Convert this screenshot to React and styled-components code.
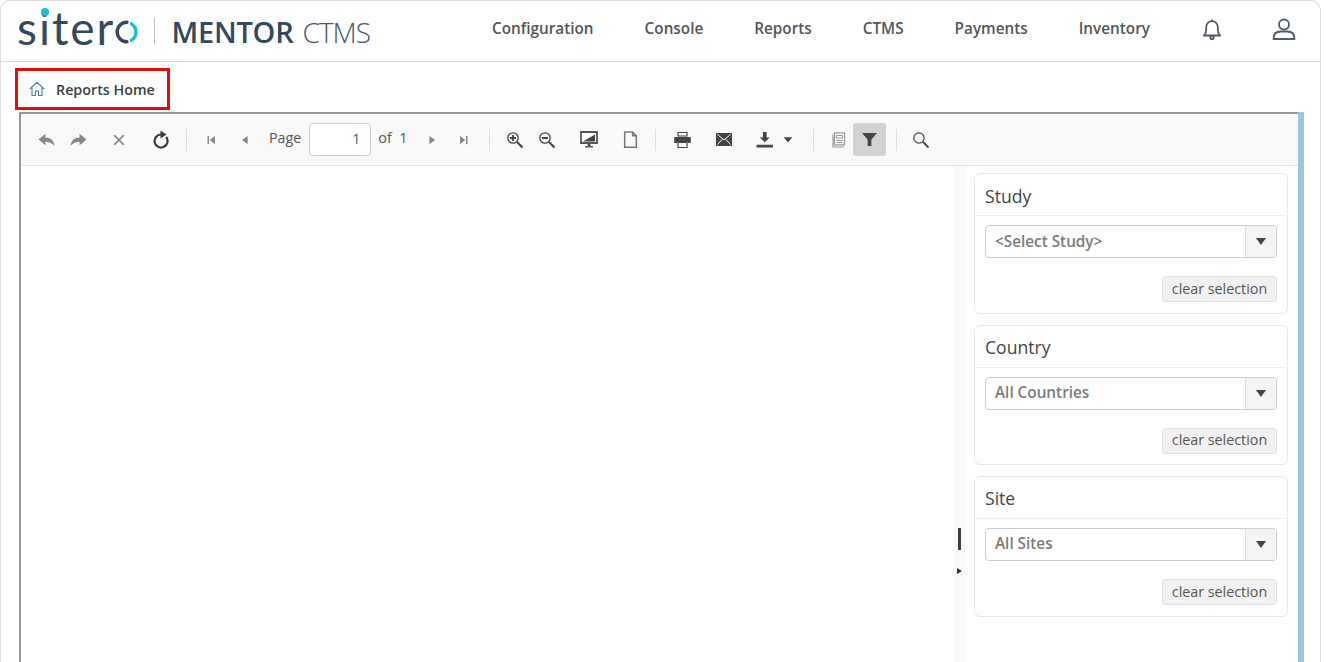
import styled, { createGlobalStyle } from "styled-components";

const GlobalStyle = createGlobalStyle`
  html, body {
    margin: 0;
    height: 100%;
    overflow: hidden;
    background: #fff;
    font-family: "Open Sans", "Liberation Sans", sans-serif;
  }
  * {
    box-sizing: border-box;
  }
`;

const Page = styled.div`
  width: 1326px;
  height: 662px;
  overflow: hidden;
`;

const Frame = styled.div`
  width: 1321px;
  height: 662px;
  border: 1px solid #ddd;
  border-bottom: 0;
  border-radius: 10px 10px 0 0;
  overflow: hidden;
`;

const Header = styled.header`
  display: flex;
  align-items: center;
  height: 61px;
  border-bottom: 1px solid #ddd;
  padding: 0 0 5px 16px;
`;

const Logo = styled.div`
  display: flex;
  align-items: center;
  width: 475px;
`;

const Wordmark = styled.div`
  position: relative;
  display: flex;
  align-items: center;
  font-family: Lato, "Open Sans", sans-serif;
  font-size: 46px;
  line-height: 46px;
  letter-spacing: 2px;
  color: #34495e;
  margin-top: -1px;
`;

const ITeal = styled.i`
  position: absolute;
  left: 23.5px;
  top: 2.5px;
  width: 8px;
  height: 8px;
  border-radius: 50%;
  background: #19bfd0;
`;

const LogoDivider = styled.span`
  width: 1px;
  height: 26px;
  background: #b9bec2;
  margin: 5px 16px 0 16px;
`;

const Product = styled.div`
  margin-top: 6px;
  font-size: 29px;
  font-weight: 600;
  color: #34495e;
  letter-spacing: -0.2px;
  white-space: nowrap;

  span {
    font-weight: 300;
    font-size: 28px;
    color: #46586a;
    letter-spacing: -1px;
    margin-left: 9px;
  }
`;

const Nav = styled.nav`
  display: flex;
  gap: 51px;
  margin-top: -2px;
  font-size: 15.3px;
  font-weight: 600;
  color: #555;
`;

const HeaderIcon = styled.span`
  display: flex;
  margin-left: ${(p) => p.$ml}px;
  color: #4f5b66;
`;

const Crumb = styled.div`
  display: flex;
  align-items: center;
  gap: 11px;
  width: 155px;
  height: 42px;
  margin: 6px 0 2px 14px;
  padding-left: 11px;
  border: 3px solid #e00b0b;
  font-size: 14.3px;
  font-weight: 600;
  color: #3a3f47;
`;

const Panel = styled.div`
  display: flex;
  width: 1285px;
  height: 550px;
  margin-left: 18px;
`;

const Viewer = styled.div`
  flex: 1;
  display: flex;
  flex-direction: column;
  border-top: 2px solid #999;
  border-left: 2px solid #999;
`;

const BlueBar = styled.div`
  width: 6px;
  background: #9bc8d8;
`;

const Toolbar = styled.div`
  display: flex;
  align-items: center;
  height: 52px;
  padding-left: 9px;
  background: #f9f9f9;
  border-bottom: 1px solid #e5e5e5;
  font-size: 14.3px;
  color: #555;
`;

const Slot = styled.span`
  display: flex;
  align-items: center;
  justify-content: center;
  flex: none;
  width: ${(p) => p.$w}px;
  height: 33px;
  margin-left: ${(p) => p.$ml || 0}px;
  border-radius: 3px;
  color: ${(p) => p.$color || "#444"};
  background: ${(p) => (p.$active ? "#d2d2d2" : "transparent")};
`;

const Sep = styled.span`
  flex: none;
  width: 1px;
  height: 22px;
  background: #ddd;
  margin: 0 ${(p) => p.$mr ?? 8}px 0 ${(p) => p.$ml ?? 8}px;
`;

const Label = styled.span`
  flex: none;
  margin-left: ${(p) => p.$ml}px;
  margin-top: -4px;
`;

const PageInput = styled.div`
  flex: none;
  width: 62px;
  height: 33px;
  margin-left: 8px;
  padding-right: 10px;
  border: 1px solid #ccc;
  border-radius: 4px;
  background: #fff;
  text-align: right;
  line-height: 30px;
`;

const Content = styled.div`
  flex: 1;
  display: flex;
`;

const Report = styled.div`
  flex: 1;
  background: #fff;
`;

const Splitter = styled.div`
  flex: none;
  display: flex;
  flex-direction: column;
  align-items: center;
  width: 13px;
  padding-top: 362px;
  background: #f9f9f9;
`;

const Handle = styled.span`
  width: 3px;
  height: 22px;
  background: #3d3d3d;
  margin-left: -1px;
`;

const HandleArrow = styled.span`
  width: 0;
  height: 0;
  margin: 18px 0 0 -1px;
  border-left: 5px solid #333;
  border-top: 3px solid transparent;
  border-bottom: 3px solid transparent;
`;

const Sidebar = styled.aside`
  flex: none;
  width: 332px;
  display: flex;
  flex-direction: column;
  gap: 11px;
  padding: 7px 10px 0 8px;
`;

const CardTitle = styled.div`
  height: 42px;
  margin: 0 1px;
  padding-left: 9px;
  border-bottom: 1px solid #eee;
  font-size: 17.6px;
  line-height: 44px;
  color: #444;
`;

const SelectValue = styled.div`
  flex: 1;
  padding-left: 9px;
  font-size: 15.3px;
  font-weight: 600;
  line-height: 30px;
  color: #7b7b7b;
`;

const Card = styled.section`
  height: 140.5px;
  border: 1px solid #e8e8e8;
  border-radius: 6px;

  & + & ${CardTitle} {
    line-height: 42px;
  }

  & + & ${SelectValue} {
    line-height: 28px;
  }
`;

const Select = styled.div`
  display: flex;
  height: 33px;
  margin: 9px 10px 18px;
  border: 1px solid #ccc;
  border-radius: 4px;
  overflow: hidden;
`;

const SelectArrow = styled.div`
  display: flex;
  align-items: center;
  justify-content: center;
  width: 31px;
  background: #f4f4f4;
  border-left: 1px solid #ddd;

  &::after {
    content: "";
    border-top: 7px solid #444;
    border-left: 5px solid transparent;
    border-right: 5px solid transparent;
  }
`;

const ClearRow = styled.div`
  display: flex;
  justify-content: flex-end;
  padding-right: 10px;
`;

const ClearButton = styled.button`
  width: 115px;
  height: 26px;
  padding: 0 0 2px;
  border: 1px solid #e0e0e0;
  border-radius: 4px;
  background: #f1f1f1;
  font-family: inherit;
  font-size: 14.3px;
  color: #555;
`;

const Icon = ({ size = 16, children, stroke }) => (
  <svg
    width={size}
    height={size}
    viewBox="0 0 16 16"
    fill={stroke ? "none" : "currentColor"}
    stroke={stroke ? "currentColor" : "none"}
    strokeWidth={stroke || 0}
  >
    {children}
  </svg>
);

const Magnifier = ({ sign }) => (
  <svg width="18" height="18" viewBox="0 0 18 18" fill="none" stroke="currentColor">
    <circle cx="7" cy="7" r="5.2" strokeWidth="1.3" />
    <path d="M11 11l5.5 5.5" strokeWidth="2" />
    {sign && <path d="M4 7h6" strokeWidth="1.8" />}
    {sign === "plus" && <path d="M7 4v6" strokeWidth="1.8" />}
  </svg>
);

const filters = [
  { title: "Study", value: "<Select Study>" },
  { title: "Country", value: "All Countries" },
  { title: "Site", value: "All Sites" },
];

const App = () => (
  <Page>
    <GlobalStyle />
    <Frame>
      <Header>
        <Logo>
          <Wordmark>
            siter
            <ITeal />
            <svg width="23" height="24" viewBox="0 0 23 24" fill="none" strokeWidth="3.4" strokeLinecap="round" style={{ marginTop: 8 }}>
              <path d="M12 2.200a9.800 9.800 0 1 0 0 19.600" stroke="#34495e" />
              <path d="M16.500 3.800a9.800 9.800 0 0 1 0 16.400" stroke="#19bfd0" />
            </svg>
          </Wordmark>
          <LogoDivider />
          <Product>
            MENTOR<span>CTMS</span>
          </Product>
        </Logo>
        <Nav>
          <span>Configuration</span>
          <span>Console</span>
          <span>Reports</span>
          <span>CTMS</span>
          <span>Payments</span>
          <span>Inventory</span>
        </Nav>
        <HeaderIcon $ml={51}>
          <svg width="22" height="24" viewBox="0 0 22 24" fill="none" stroke="currentColor" strokeWidth="1.8">
            <path d="M3 18.500c1.600-1.600 2.200-3 2.200-5.500V10a5.800 5.800 0 0 1 11.600 0v3c0 2.500.6 3.900 2.200 5.500z" strokeLinejoin="round" />
            <path d="M11 4V2.500" />
            <circle cx="11" cy="20.500" r="1.700" />
          </svg>
        </HeaderIcon>
        <HeaderIcon $ml={49}>
          <svg width="24" height="24" viewBox="0 0 24 24" fill="none" stroke="currentColor" strokeWidth="1.8">
            <circle cx="12" cy="7.500" r="5" />
            <path d="M1.500 22c0-5 3-7.500 7-7.500h7c4 0 7 2.500 7 7.500z" strokeLinejoin="round" />
          </svg>
        </HeaderIcon>
      </Header>
      <Crumb>
        <svg width="16" height="16" viewBox="0 0 16 16" fill="none" stroke="#3f7fc4" strokeWidth="1.100">
          <path d="M.8 8L8 1.300 15.200 8M3 6.500V14.500h3.500V10h3v4.500H13V6.500" />
        </svg>
        Reports Home
      </Crumb>
      <Panel>
        <Viewer>
          <Toolbar>
            <Slot $w={32} $color="#888">
              <Icon size={17}><path d="M7 2.500L.5 8 7 13.500V10c3.500 0 6 1 8.500 4-.5-5-3.500-8-8.500-8z" /></Icon>
            </Slot>
            <Slot $w={32} $color="#888">
              <Icon size={17}><path d="M9 2.500L15.500 8 9 13.500V10c-3.500 0-6 1-8.500 4 .5-5 3.500-8 8.500-8z" /></Icon>
            </Slot>
            <Slot $w={50} $color="#888">
              <Icon size={14} stroke={2}><path d="M2.500 2.500l11 11M13.500 2.500l-11 11" /></Icon>
            </Slot>
            <Slot $w={34} $color="#3c3c3c">
              <svg width="18" height="19" viewBox="0 0 18 19" fill="none" stroke="currentColor" strokeWidth="2.200">
                <path d="M9 4.500A6.500 6.500 0 1 0 14.200 7" />
                <path d="M8.500 0.500L14.500 4.500 8.500 8.500z" fill="currentColor" stroke="none" />
              </svg>
            </Slot>
            <Sep />
            <Slot $w={33} $color="#888">
              <Icon size={12}><path d="M2 2.500h2v11H2zM12 2.500v11L5 8z" /></Icon>
            </Slot>
            <Slot $w={33} $color="#888">
              <Icon size={12}><path d="M11.500 2.500v11L4 8z" /></Icon>
            </Slot>
            <Label $ml={8}>Page</Label>
            <PageInput>1</PageInput>
            <Label $ml={7}>of&nbsp;&nbsp;1</Label>
            <Slot $w={33} $ml={8} $color="#888">
              <Icon size={12}><path d="M4.500 2.500v11L12 8z" /></Icon>
            </Slot>
            <Slot $w={29} $color="#888">
              <Icon size={12}><path d="M14 2.500h-2v11h2zM4 2.500v11L11 8z" /></Icon>
            </Slot>
            <Sep $ml={12} $mr={8} />
            <Slot $w={33}><Magnifier sign="plus" /></Slot>
            <Slot $w={32}><Magnifier sign="minus" /></Slot>
            <Slot $w={51}>
              <svg width="18" height="17" viewBox="0 0 18 17">
                <path d="M1 1h16v11H1z" fill="#fff" stroke="#555" strokeWidth="1.800" />
                <path d="M3 10.500l12-7v7z" fill="#444" />
                <path d="M5 15h8v1.500H5zM7.500 12h3v3h-3z" fill="#555" />
              </svg>
            </Slot>
            <Slot $w={32} $color="#777">
              <Icon size={17} stroke={1.400}><path d="M2.500 1h7.500l3.500 3.500V15.200h-11zM10 1v3.500h3.500" /></Icon>
            </Slot>
            <Sep $ml={9} $mr={10} />
            <Slot $w={33}>
              <svg width="17" height="16" viewBox="0 0 17 16">
                <path d="M4 .5h9v3.500H4z" fill="none" stroke="#444" strokeWidth="1.200" />
                <path d="M1 5h15q.8 0 .8 1v5H14v-1H3v1H.2V6q0-1 .8-1z" fill="#444" />
                <path d="M4 10.500h9v5H4z" fill="#fff" stroke="#444" strokeWidth="1.200" />
              </svg>
            </Slot>
            <Slot $w={49}>
              <svg width="16" height="13" viewBox="0 0 16 13">
                <path d="M0 0h16v13H0z" fill="#444" />
                <path d="M1.500 1.500L8 7l6.500-5.500M1.500 11.500l4.500-5M14.500 11.500l-4.500-5" fill="none" stroke="#fff" strokeWidth="1" />
              </svg>
            </Slot>
            <Slot $w={33}>
              <Icon size={17}><path d="M6.500 1h3.500v5h3L8.200 10.500 3.500 6h3zM.500 13h16v2.500H.500z" /></Icon>
            </Slot>
            <Slot $w={14}>
              <Icon size={10}><path d="M1 3.500h14L8 12z" /></Icon>
            </Slot>
            <Sep $ml={18} $mr={11} />
            <Slot $w={28} $color="#999">
              <svg width="15" height="16" viewBox="0 0 15 16" fill="none" stroke="currentColor">
                <path d="M2.500.8h10v12h-10zM1 2.500v12.500h11" strokeWidth="1.200" />
                <path d="M4.500 3.500h6v2.500h-6zM4.500 8.500h6M4.500 10.500h6" strokeWidth="1" />
              </svg>
            </Slot>
            <Slot $w={33} $active>
              <Icon size={15}><path d="M0 1h16L10 8v7H6V8z" /></Icon>
            </Slot>
            <Sep $ml={10} $mr={7} />
            <Slot $w={33}>
              <svg width="18" height="18" viewBox="0 0 18 18" fill="none" stroke="currentColor">
                <circle cx="7" cy="7" r="5.200" strokeWidth="1.200" />
                <path d="M11 11l5.500 5.500" strokeWidth="1.800" />
              </svg>
            </Slot>
          </Toolbar>
          <Content>
            <Report />
            <Splitter>
              <Handle />
              <HandleArrow />
            </Splitter>
            <Sidebar>
              {filters.map((f) => (
                <Card key={f.title}>
                  <CardTitle>{f.title}</CardTitle>
                  <Select>
                    <SelectValue>{f.value}</SelectValue>
                    <SelectArrow />
                  </Select>
                  <ClearRow>
                    <ClearButton>clear selection</ClearButton>
                  </ClearRow>
                </Card>
              ))}
            </Sidebar>
          </Content>
        </Viewer>
        <BlueBar />
      </Panel>
    </Frame>
  </Page>
);

export default App;
